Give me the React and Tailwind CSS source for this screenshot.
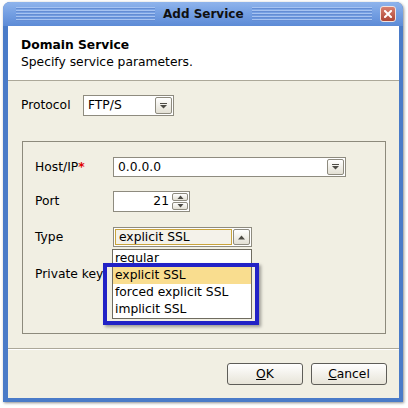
function DownArrow() {
  return (
    <svg width="7" height="6" viewBox="0 0 7 6">
      <rect x="0" y="0" width="7" height="1" fill="#4d4b45" />
      <polygon points="0,2 7,2 3.5,5.5" fill="#4d4b45" />
    </svg>
  );
}

function UpArrow() {
  return (
    <svg width="7" height="5" viewBox="0 0 7 5">
      <polygon points="0,4.5 7,4.5 3.5,0.5" fill="#4d4b45" />
    </svg>
  );
}

function SmallTri({ up }) {
  return (
    <svg width="7" height="4" viewBox="0 0 7 4">
      {up ? (
        <polygon points="0.5,4 6.5,4 3.5,0.5" fill="#4d4b45" />
      ) : (
        <polygon points="0.5,0 6.5,0 3.5,3.5" fill="#4d4b45" />
      )}
    </svg>
  );
}

function ComboButton({ children }) {
  return (
    <div className="w-[17px] h-full border border-[#8e8b7f] rounded-[2px] bg-gradient-to-b from-[#ffffff] to-[#e3e0d4] flex items-center justify-center">
      {children}
    </div>
  );
}

const stripeCls =
  "h-[15px] bg-[repeating-linear-gradient(to_bottom,#a6c3f1_0px,#a6c3f1_1px,#648dd4_1px,#648dd4_2px,transparent_2px,transparent_3px)]";

export default function App() {
  return (
    <div className="w-[408px] h-[408px] bg-white pl-[3px] pt-[2px] font-['DejaVu_Sans',sans-serif] text-[12.3px] text-black">
      <div className="w-[400px] h-[400px] rounded-t-[7px] bg-[#4a7bc8] flex flex-col shadow-[1px_1px_3px_rgba(0,0,0,0.45)]">
        {/* Title bar */}
        <div className="h-[24px] rounded-t-[7px] bg-gradient-to-b from-[#8fb4ec] via-[#739ee2] to-[#5d8bd6] flex items-center pl-[13px] pr-[7px]">
          <div className={`w-[139px] ${stripeCls}`} />
          <div className="mx-[8px] font-bold text-[12px] leading-[15px] text-[#101010]">Add Service</div>
          <div className={`flex-1 ${stripeCls}`} />
          <div className="ml-[8px] w-[16px] h-[16px] rounded-[3px] border border-[#f2e2dd] bg-gradient-to-b from-[#d9806f] to-[#ad4535] flex items-center justify-center">
            <svg width="8" height="8" viewBox="0 0 8 8">
              <path d="M1 1 L7 7 M7 1 L1 7" stroke="#ffffff" strokeWidth="2" strokeLinecap="square" />
            </svg>
          </div>
        </div>

        {/* Content */}
        <div className="flex-1 flex flex-col ml-[5px] mr-[4px] mb-[4px] bg-[#f1efe3]">
          {/* Header */}
          <div className="h-[55px] bg-white border-b border-[#aca899] pl-[13px] pt-[11px] leading-[17px]">
            <div className="font-bold">Domain Service</div>
            <div>Specify service parameters.</div>
          </div>

          {/* Body */}
          <div className="flex flex-col pt-[14px]">
            <div className="flex items-center h-[21px] pl-[13px]">
              <div className="w-[62px]">Protocol</div>
              <div className="w-[91px] h-[21px] flex border border-[#8e8b7f] bg-white p-[1px]">
                <div className="flex-1 pl-[3px] leading-[17px]">FTP/S</div>
                <ComboButton>
                  <DownArrow />
                </ComboButton>
              </div>
            </div>

            {/* Group box */}
            <div className="mt-[25px] ml-[14px] w-[364px] h-[193px] border border-[#8d8a7c] pl-[12px] pt-[15px] flex flex-col">
              <div className="flex items-center h-[20px]">
                <div className="w-[78px]">
                  Host/IP<span className="text-[#e00000] font-bold">*</span>
                </div>
                <div className="w-[233px] h-[20px] flex border border-[#8e8b7f] bg-white p-[1px]">
                  <div className="flex-1 pl-[3px] leading-[16px]">0.0.0.0</div>
                  <ComboButton>
                    <DownArrow />
                  </ComboButton>
                </div>
              </div>

              <div className="flex items-center h-[21px] mt-[14px]">
                <div className="w-[78px]">Port</div>
                <div className="w-[77px] h-[21px] flex border border-[#8e8b7f] bg-white p-[1px]">
                  <div className="flex-1 text-right pr-[3px] leading-[17px]">21</div>
                  <div className="w-[16px] flex flex-col gap-[1px]">
                    <div className="flex-1 border border-[#8e8b7f] rounded-[2px] bg-gradient-to-b from-white to-[#e3e0d4] flex items-center justify-center">
                      <SmallTri up />
                    </div>
                    <div className="flex-1 border border-[#8e8b7f] rounded-[2px] bg-gradient-to-b from-white to-[#e3e0d4] flex items-center justify-center">
                      <SmallTri />
                    </div>
                  </div>
                </div>
              </div>

              <div className="flex items-center h-[20px] mt-[15px]">
                <div className="w-[78px]">Type</div>
                <div className="relative w-[139px] h-[20px] flex border border-[#8e8b7f] bg-white p-[1px] gap-[1px]">
                  <div className="flex-1 border border-[#c9a43c] bg-[#f4f2ea] pl-[3px] leading-[14px]">explicit SSL</div>
                  <ComboButton>
                    <UpArrow />
                  </ComboButton>

                  {/* Popup list */}
                  <div className="absolute left-[-2px] top-[21px] w-[140px] h-[70px] border border-[#6f6c60] bg-white flex flex-col z-10">
                    <div className="h-[17px] pl-[2px] leading-[17px]">regular</div>
                    <div className="h-[17px] pl-[2px] leading-[17px] bg-[#f9dd8f]">explicit SSL</div>
                    <div className="h-[17px] pl-[2px] leading-[17px]">forced explicit SSL</div>
                    <div className="h-[17px] pl-[2px] leading-[17px]">implicit SSL</div>
                  </div>

                  {/* Highlight annotation */}
                  <div className="absolute left-[-11px] top-[35px] w-[156px] h-[62px] border-[4px] border-[#2222c6] z-20 shadow-[2px_2px_3px_rgba(0,0,0,0.35)]" />
                </div>
              </div>

              <div className="flex items-center h-[20px] mt-[17px]">
                <div className="w-[78px]">Private key</div>
              </div>
            </div>

            {/* Separator */}
            <div className="mt-[14px] border-t border-[#aca899] border-b border-b-white" />

            {/* Buttons */}
            <div className="mt-[13px] flex justify-end gap-[8px] pr-[12px]">
              <div className="w-[76px] h-[22px] rounded-[3px] border border-[#5e5d58] bg-gradient-to-b from-white to-[#e7e4d8] flex items-center justify-center">
                <span><span className="underline">O</span>K</span>
              </div>
              <div className="w-[76px] h-[22px] rounded-[3px] border border-[#5e5d58] bg-gradient-to-b from-white to-[#e7e4d8] flex items-center justify-center">
                <span><span className="underline">C</span>ancel</span>
              </div>
            </div>
          </div>
        </div>
      </div>
    </div>
  );
}
